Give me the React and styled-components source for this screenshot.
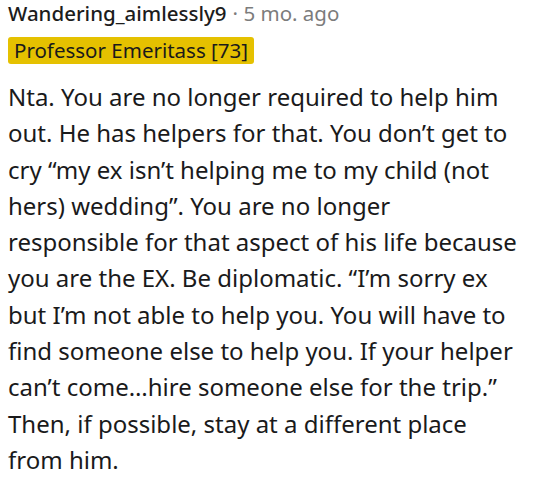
import React from 'react';
import styled, { createGlobalStyle } from 'styled-components';

const GlobalStyle = createGlobalStyle`
  body {
    margin: 0;
    background: #ffffff;
  }
`;

const Comment = styled.div`
  padding: 0 8px;
  width: 533px;
  box-sizing: border-box;
`;

const Meta = styled.div`
  display: flex;
  align-items: baseline;
  gap: 6px;
  font-family: "Noto Sans", sans-serif;
  font-size: 20.5px;
  line-height: 26px;
  height: 26px;
`;

const Author = styled.span`
  color: #1c1c1c;
  font-weight: 500;
`;

const Time = styled.span`
  color: #7c7c7c;
`;

const FlairRow = styled.div`
  display: flex;
  margin-top: 11px;
`;

const Flair = styled.span`
  padding: 0 6px;
  background: #e5c100;
  color: #1a1a1b;
  border-radius: 3px;
  font-family: "Noto Sans", sans-serif;
  font-size: 20.5px;
  line-height: 27px;
`;

const Body = styled.p`
  margin: 15px 0 0;
  color: #1a1a1b;
  font-family: "Noto Sans", sans-serif;
  font-size: 24px;
  line-height: 36.3px;
`;

export default function App() {
  return (
    <>
      <GlobalStyle />
      <Comment>
        <Meta>
          <Author>Wandering_aimlessly9</Author>
          <Time>· 5 mo. ago</Time>
        </Meta>
        <FlairRow>
          <Flair>Professor Emeritass [73]</Flair>
        </FlairRow>
        <Body>
          Nta. You are no longer required to help him out. He has helpers for that. You don’t get to cry “my ex isn’t helping me to my child (not hers) wedding”. You are no longer responsible for that aspect of his life because you are the EX. Be diplomatic. “I’m sorry ex but I’m not able to help you. You will have to find someone else to help you. If your helper can’t come…hire someone else for the trip.” Then, if possible, stay at a different place from him.
        </Body>
      </Comment>
    </>
  );
}
